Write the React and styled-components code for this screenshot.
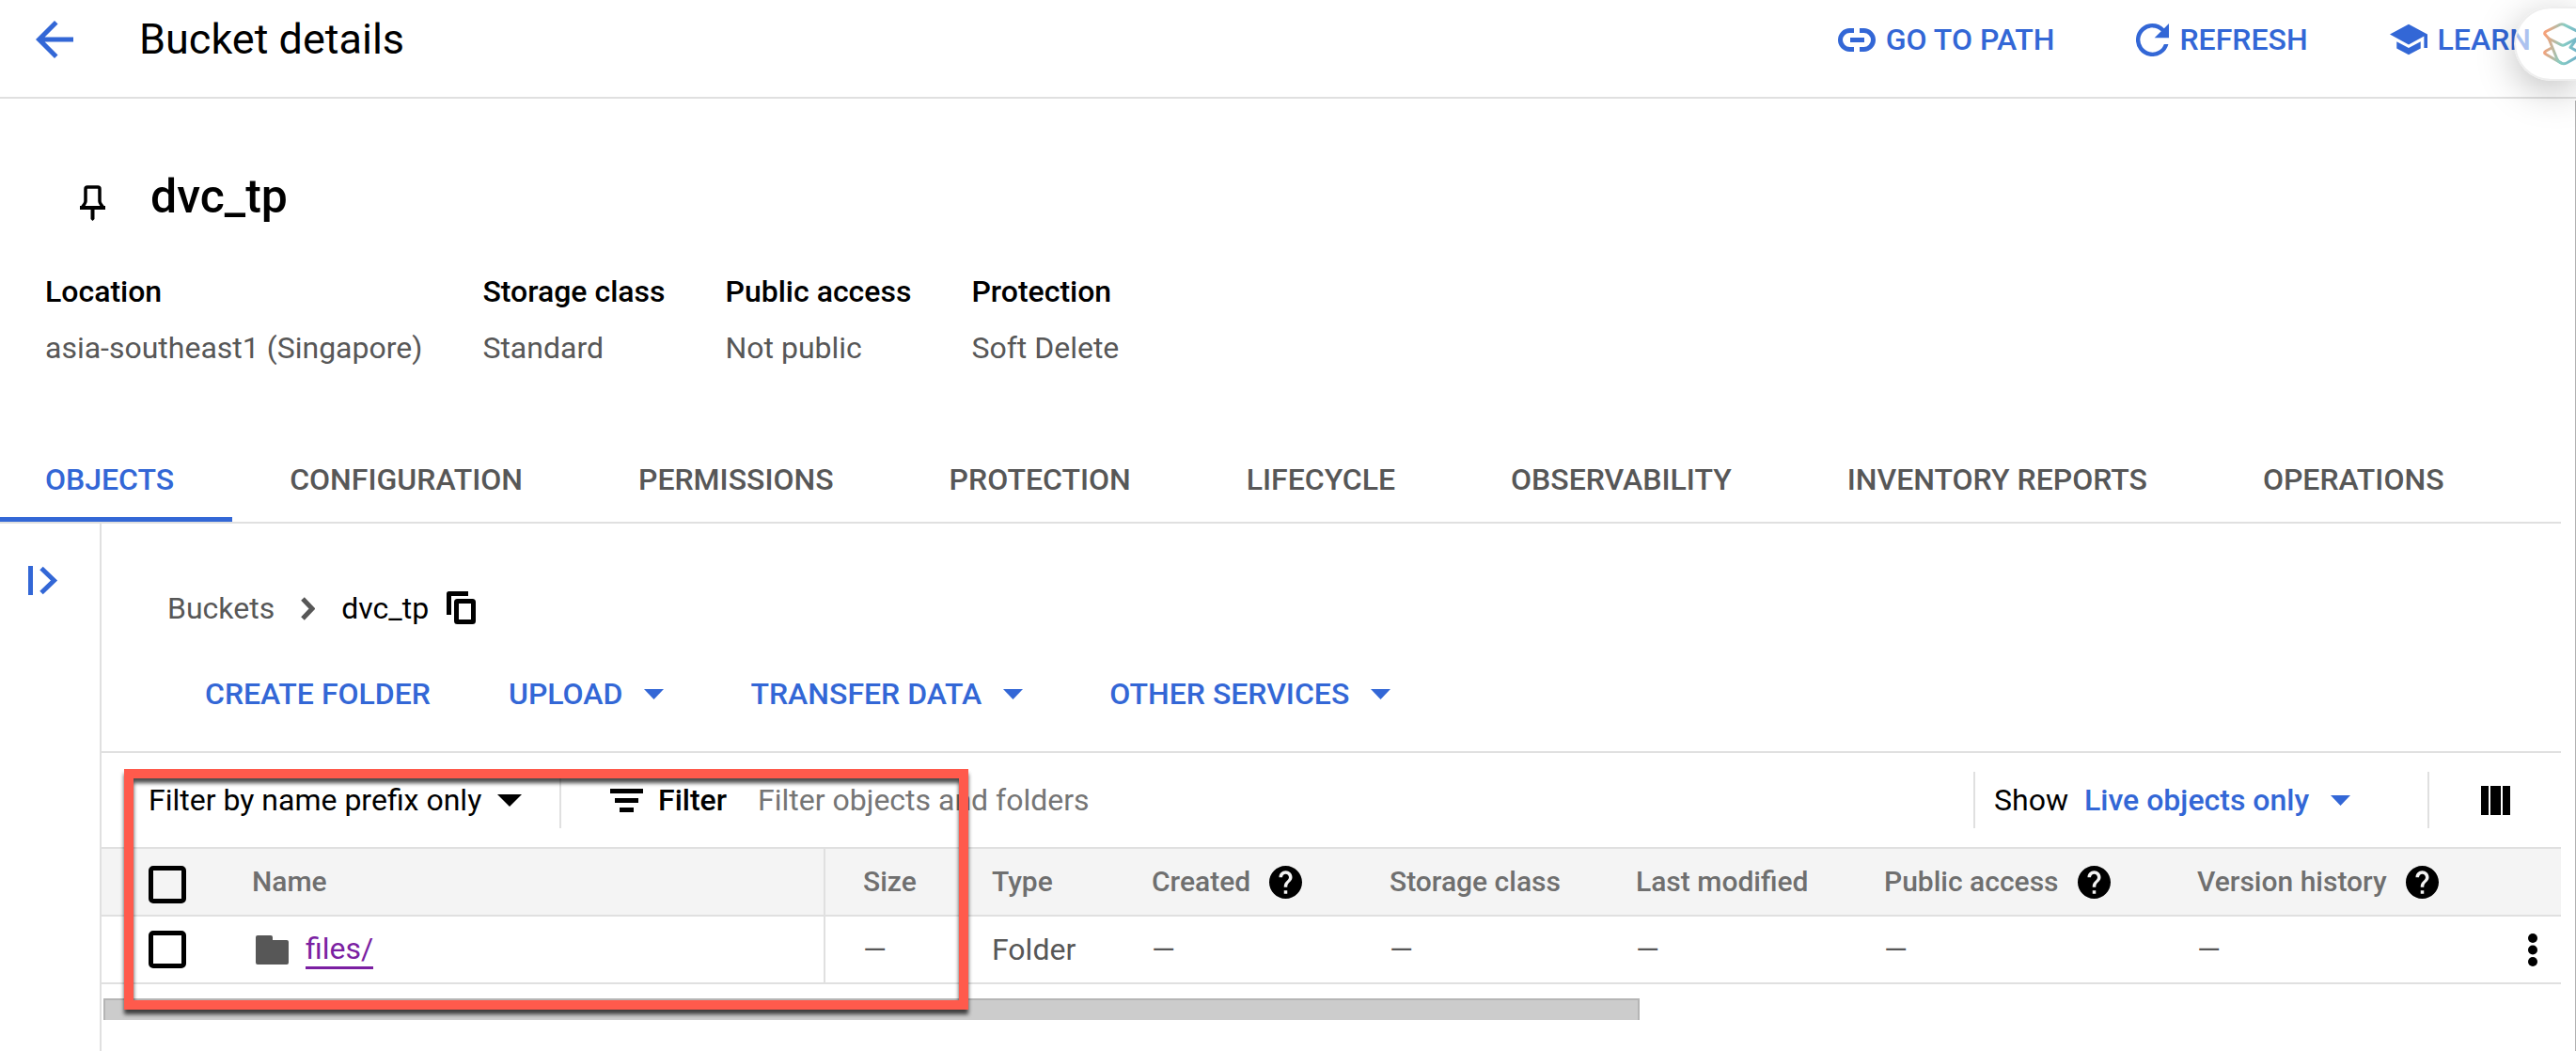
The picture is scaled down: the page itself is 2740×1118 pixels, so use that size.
import React from "react";
import styled, { createGlobalStyle } from "styled-components";

const blue = "#3367d6";
const line = "#e0e0e0";
const grey = "#575757";

const GlobalStyle = createGlobalStyle`
  *, *::before, *::after { box-sizing: border-box; }
  body {
    margin: 0;
    background: #fff;
    color: #000;
    font-family: Roboto, "Liberation Sans", sans-serif;
    font-size: 32px;
    line-height: 40px;
  }
  button, select, input { font: inherit; color: inherit; }
  h1, h2, p, dl, dd { margin: 0; }
`;

const Page = styled.div`
  position: relative;
  min-height: 100vh;
  overflow: hidden;
  display: flex;
  flex-direction: column;
`;

const Header = styled.header`
  display: flex;
  align-items: center;
  padding: 12px 48px 31px 28px;
  border-bottom: 2px solid ${line};
`;

const PlainButton = styled.button`
  display: flex;
  align-items: center;
  padding: 0;
  border: 0;
  background: none;
  white-space: nowrap;
  cursor: pointer;
`;

const BackButton = styled(PlainButton)`
  width: 60px;
  height: 60px;
  justify-content: center;
  color: ${blue};
`;

const PageTitle = styled.h1`
  margin-left: 60px;
  font-size: 45px;
  line-height: 60px;
  font-weight: 400;
`;

const HeaderActions = styled.nav`
  display: flex;
  align-items: center;
  gap: 87px;
  margin-left: auto;
`;

const HeaderAction = styled(PlainButton)`
  gap: 11px;
  color: ${blue};
  font-weight: 500;
`;

const Main = styled.main`
  flex: 1;
  display: flex;
  flex-direction: column;
  margin-top: 2px;
  padding-right: 15px;
  border-right: 1px solid #b0b0b0;
`;

const BucketHeading = styled.div`
  display: flex;
  align-items: flex-end;
  gap: 48px;
  padding: 72px 0 0 85px;
`;

const PinButton = styled(PlainButton)`
  padding-bottom: 4px;
`;

const BucketName = styled.h2`
  font-size: 50px;
  line-height: 60px;
  font-weight: 500;
`;

const Facts = styled.dl`
  display: flex;
  gap: 64px;
  padding: 51px 48px 75px;
`;

const Fact = styled.div`
  display: flex;
  flex-direction: column;
  gap: 20px;
`;

const FactLabel = styled.dt`
  font-weight: 500;
`;

const FactValue = styled.dd`
  color: ${grey};
`;

const Tabs = styled.div`
  display: flex;
  border-bottom: 2px solid ${line};
`;

const Tab = styled(PlainButton)`
  height: 90px;
  padding: 0 62px 0 61px;
  font-weight: 500;
  color: ${(p) => (p.$active ? blue : grey)};
  box-shadow: ${(p) => (p.$active ? `inset 0 -5px ${blue}` : "none")};
  &:first-child { padding-left: 48px; }
`;

const Body = styled.div`
  flex: 1;
  display: grid;
  grid-template-columns: 108px minmax(0, 1fr);
`;

const Rail = styled.aside`
  padding: 45px 0 0 30px;
  border-right: 2px solid ${line};
  color: ${blue};
`;

const Panel = styled.section`
  padding-top: 70px;
`;

const Breadcrumb = styled.nav`
  display: flex;
  align-items: center;
  padding-left: 70px;
`;

const CrumbLink = styled.a`
  margin-right: 28px;
  color: ${grey};
  text-decoration: none;
`;

const CrumbCurrent = styled.span`
  margin: 0 19px 0 28px;
`;

const Actions = styled.div`
  display: flex;
  padding: 51px 0 41px 68px;
  border-bottom: 2px solid ${line};
`;

const Action = styled(PlainButton)`
  gap: 23px;
  padding: 0 ${(p) => (p.$menu ? 50 : 41)}px 0 42px;
  color: ${blue};
  font-weight: 500;
`;

const Toolbar = styled.div`
  display: flex;
  align-items: center;
  height: 100px;
  padding-left: 50px;
`;

const Divider = styled.span`
  width: 2px;
  height: 60px;
  background: ${line};
`;

const SelectWrap = styled.span`
  display: inline-flex;
  align-items: center;
  gap: ${(p) => p.$gap}px;
  color: ${(p) => (p.$accent ? blue : "#000")};
`;

const Select = styled.select`
  appearance: none;
  padding: 0;
  border: 0;
  background: none;
  line-height: 40px;
  font-weight: ${(p) => (p.$accent ? 500 : 400)};
`;

const PrefixGroup = styled.div`
  display: flex;
  align-items: center;
  gap: 40px;
`;

const FilterGroup = styled.div`
  flex: 1;
  display: flex;
  align-items: center;
  padding-left: 52px;
`;

const FilterLabel = styled.label`
  display: inline-flex;
  align-items: center;
  gap: 16px;
  font-weight: 500;
`;

const FilterInput = styled.input`
  flex: 1;
  min-width: 0;
  margin-left: 33px;
  padding: 0;
  border: 0;
  outline: 0;
  background: none;
  &::placeholder { color: #757575; opacity: 1; }
`;

const ShowGroup = styled.div`
  display: flex;
  align-items: center;
  gap: 17px;
  padding: 0 82px 0 20px;
`;

const ColumnsButton = styled(PlainButton)`
  padding: 0 54px 0 55px;
`;

const Table = styled.table`
  width: 100%;
  table-layout: fixed;
  border-collapse: collapse;
`;

const Col = styled.col`
  width: ${(p) => (p.$w ? `${p.$w}px` : "auto")};
`;

const HeadRow = styled.tr`
  height: 72px;
  background: #f4f4f4;
  border-top: 2px solid ${line};
  border-bottom: 2px solid ${line};
`;

const Row = styled.tr`
  height: 72px;
  border-bottom: 2px solid ${line};
`;

const HeadCell = styled.th`
  padding: 0 0 0 40px;
  border-right: ${(p) => (p.$ruled ? `2px solid ${line}` : 0)};
  font-size: 30px;
  line-height: 40px;
  font-weight: 500;
  text-align: left;
  white-space: nowrap;
  color: #6f6f6f;
`;

const HeadLabel = styled.span`
  display: flex;
  align-items: center;
  gap: 20px;
`;

const HelpButton = styled(PlainButton)`
  color: #000;
`;

const Cell = styled.td`
  padding: 0 0 0 40px;
  border-right: ${(p) => (p.$ruled ? `2px solid ${line}` : 0)};
  color: ${grey};
`;

const CheckHead = styled.td`
  padding: 6px 0 0 50px;
`;

const CheckCell = styled.td`
  padding: 0 0 0 50px;
`;

const MoreCell = styled.td`
  padding: 0 25px 0 0;
`;

const MoreButton = styled(PlainButton)`
  margin-left: auto;
`;

const Checkbox = styled.input`
  appearance: none;
  display: block;
  width: 40px;
  height: 40px;
  margin: 0;
  border: 5px solid #000;
  border-radius: 5px;
`;

const FileEntry = styled.div`
  display: flex;
  align-items: center;
  gap: 18px;
  padding-left: 4px;
`;

const FileLink = styled.a`
  border-bottom: 3px solid #7b1fa2;
  line-height: 38px;
  color: #7b1fa2;
  text-decoration: none;
`;

const Scrollbar = styled.div`
  margin: 15px 0 0 2px;
`;

const ScrollThumb = styled.div`
  width: 62.5%;
  height: 23px;
  border: solid #b5b5b5;
  border-width: 2px 2px 0;
  background: #ccc;
`;

const Highlight = styled.div`
  position: absolute;
  left: 132px;
  top: 818px;
  width: 898px;
  height: 256px;
  border: 10px solid #ff5a4c;
  filter: drop-shadow(0 5px 2px rgba(0, 0, 0, 0.7));
  pointer-events: none;
`;

const Floating = styled.button`
  position: absolute;
  top: 7px;
  right: 0;
  width: 66px;
  height: 79px;
  padding: 0 0 0 29px;
  border: 2px solid #eee;
  border-right: 0;
  border-radius: 40px 0 0 40px;
  background: rgba(255, 255, 255, 0.6);
  box-shadow: 0 10px 40px rgba(0, 0, 0, 0.25);
  overflow: hidden;
`;

const Svg = styled.svg`
  display: block;
  flex: none;
`;

const Icon = ({ w, h, box, children }) => (
  <Svg width={w} height={h} viewBox={box || `0 0 ${w} ${h}`} fill="currentColor" aria-hidden="true">
    {children}
  </Svg>
);

const Caret = ({ large }) =>
  large ? (
    <Icon w={26} h={13}><path d="M0 0h26L13 13z" /></Icon>
  ) : (
    <Icon w={21} h={11}><path d="M0 0h21L10.500 11z" /></Icon>
  );

const BackIcon = () => (
  <Icon w={40} h={40} box="4 4 16 16">
    <path d="M20 11H7.830l5.590-5.590L12 4l-8 8 8 8 1.410-1.410L7.830 13H20v-2z" />
  </Icon>
);

const LinkIcon = () => (
  <Icon w={40} h={25}>
    <path d="M17 2.500h-4.500a10 10 0 0 0 0 20H17M23 2.500h4.500a10 10 0 0 1 0 20H23M13 12.500h15" fill="none" stroke="currentColor" strokeWidth="5" />
  </Icon>
);

const RefreshIcon = () => (
  <Icon w={35} h={35} box="4 4 16 16">
    <path d="M17.650 6.350A7.958 7.958 0 0 0 12 4a8 8 0 1 0 7.730 10h-2.080A6 6 0 1 1 12 6c1.660 0 3.140.690 4.220 1.780L13 11h7V4l-2.350 2.350z" />
  </Icon>
);

const LearnIcon = () => (
  <Icon w={40} h={34} box="1 3 22 18">
    <path d="M5 13.180v4L12 21l7-3.820v-4L12 17l-7-3.820zM12 3 1 9l11 6 9-4.910V17h2V9L12 3z" />
  </Icon>
);

const PinIcon = () => (
  <Icon w={27} h={38}>
    <path d="M8 2h11q2 0 2 2v13q0 2 4 7H2q4-5 4-7V4q0-2 2-2z" fill="none" stroke="currentColor" strokeWidth="3.500" />
    <path d="M0 22h27v4H0zM11.500 25h4v11l-2 2-2-2z" />
  </Icon>
);

const RailIcon = () => (
  <Icon w={32} h={31}>
    <path d="M0 0h5v31H0z" />
    <path d="M14 2.500 27.500 15.500 14 28.500" fill="none" stroke="currentColor" strokeWidth="5" />
  </Icon>
);

const ChevronIcon = () => (
  <Icon w={15} h={25}>
    <path d="M2 2l10 10.500L2 23" fill="none" stroke={grey} strokeWidth="5" />
  </Icon>
);

const CopyIcon = () => (
  <Icon w={31} h={36}>
    <path d="M2.500 25V2.500H23" fill="none" stroke="currentColor" strokeWidth="5" strokeLinejoin="round" />
    <rect x="10.500" y="10.500" width="18" height="22" rx="1" fill="none" stroke="currentColor" strokeWidth="5" />
  </Icon>
);

const FilterIcon = () => (
  <Icon w={35} h={25}>
    <path d="M0 0h35v5H0zM5 10h25v5H5zM10 20h15v5H10z" />
  </Icon>
);

const ColumnsIcon = () => (
  <Icon w={31} h={31}>
    <path d="M0 0h8v31H0zM10 0h11v31H10zM23 0h8v31h-8z" />
  </Icon>
);

const HelpIcon = () => (
  <Icon w={35} h={35} box="2 2 20 20">
    <path d="M12 2C6.480 2 2 6.480 2 12s4.480 10 10 10 10-4.480 10-10S17.520 2 12 2zm1 17h-2v-2h2v2zm2.070-7.750-.9.920C13.450 12.900 13 13.500 13 15h-2v-.5c0-1.100.450-2.100 1.170-2.830l1.240-1.260c.370-.360.590-.860.590-1.410 0-1.100-.9-2-2-2s-2 .9-2 2H8c0-2.210 1.790-4 4-4s4 1.790 4 4c0 .880-.360 1.680-.930 2.250z" />
  </Icon>
);

const FolderIcon = () => (
  <Icon w={35} h={31}>
    <path d="M2 0h14q2 0 2 2v3h15q2 0 2 2v22q0 2-2 2H2q-2 0-2-2V2q0-2 2-2z" />
  </Icon>
);

const MoreIcon = () => (
  <Icon w={10} h={35}>
    <circle cx="5" cy="5" r="5" />
    <circle cx="5" cy="17.500" r="5" />
    <circle cx="5" cy="30" r="5" />
  </Icon>
);

const AssistantLogo = () => (
  <Icon w={42} h={46}>
    <defs>
      <linearGradient id="assistant" gradientUnits="userSpaceOnUse" x1="0" y1="20" x2="42" y2="26">
        <stop offset="0.050" stopColor="#f5a27a" />
        <stop offset="0.500" stopColor="#86cdc4" />
        <stop offset="0.900" stopColor="#6fb0c8" />
      </linearGradient>
    </defs>
    <g fill="none" stroke="url(#assistant)" strokeWidth="3" strokeLinejoin="round" strokeLinecap="round">
      <path d="M3 9.500 18 2.200q2-1 4 0L38 10q2 1.500 1 3.500L36 17 23 23.700q-2 1-4 0L6 17 2 12.500q-1-1.500 1-3z" />
      <path d="M6 17l8.500 21q1.500 4 5 5" />
      <path d="M8 27.500 3 30.200q-3 1.800 0 3.500L19 43q3 1.500 6 0l14-8q2-1.500 0-3l-9-5" />
      <path d="M36 17l-7 9.500" />
    </g>
  </Icon>
);

const headerActions = [
  ["GO TO PATH", LinkIcon],
  ["REFRESH", RefreshIcon],
  ["LEARN", LearnIcon],
];

const facts = [
  ["Location", "asia-southeast1 (Singapore)"],
  ["Storage class", "Standard"],
  ["Public access", "Not public"],
  ["Protection", "Soft Delete"],
];

const tabs = [
  "OBJECTS",
  "CONFIGURATION",
  "PERMISSIONS",
  "PROTECTION",
  "LIFECYCLE",
  "OBSERVABILITY",
  "INVENTORY REPORTS",
  "OPERATIONS",
];

const actions = [
  ["CREATE FOLDER", false],
  ["UPLOAD", true],
  ["TRANSFER DATA", true],
  ["OTHER SERVICES", true],
];

const columns = [
  { label: "Size", value: "—", width: 138 },
  { label: "Type", value: "Folder", width: 170 },
  { label: "Created", value: "—", width: 253, help: true },
  { label: "Storage class", value: "—", width: 262 },
  { label: "Last modified", value: "—", width: 264 },
  { label: "Public access", value: "—", width: 333, help: true },
  { label: "Version history", value: "—", width: 320, help: true },
];

export default function App() {
  return (
    <>
      <GlobalStyle />
      <Page>
        <Header>
          <BackButton aria-label="Back"><BackIcon /></BackButton>
          <PageTitle>Bucket details</PageTitle>
          <HeaderActions>
            {headerActions.map(([label, Glyph]) => (
              <HeaderAction key={label}><Glyph />{label}</HeaderAction>
            ))}
          </HeaderActions>
        </Header>

        <Main>
          <BucketHeading>
            <PinButton aria-label="Pin bucket"><PinIcon /></PinButton>
            <BucketName>dvc_tp</BucketName>
          </BucketHeading>

          <Facts>
            {facts.map(([label, value]) => (
              <Fact key={label}>
                <FactLabel>{label}</FactLabel>
                <FactValue>{value}</FactValue>
              </Fact>
            ))}
          </Facts>

          <Tabs role="tablist">
            {tabs.map((label, i) => (
              <Tab key={label} role="tab" aria-selected={i === 0} $active={i === 0}>{label}</Tab>
            ))}
          </Tabs>

          <Body>
            <Rail>
              <PlainButton aria-label="Expand folder browser"><RailIcon /></PlainButton>
            </Rail>

            <Panel>
              <Breadcrumb aria-label="Breadcrumb">
                <CrumbLink href="#buckets">Buckets</CrumbLink>
                <ChevronIcon />
                <CrumbCurrent>dvc_tp</CrumbCurrent>
                <PlainButton aria-label="Copy path"><CopyIcon /></PlainButton>
              </Breadcrumb>

              <Actions>
                {actions.map(([label, menu]) => (
                  <Action key={label} $menu={menu} aria-haspopup={menu ? "menu" : undefined}>
                    {label}
                    {menu && <Caret />}
                  </Action>
                ))}
              </Actions>

              <Toolbar>
                <PrefixGroup>
                  <SelectWrap $gap={16}>
                    <Select aria-label="Filter mode">
                      <option>Filter by name prefix only</option>
                    </Select>
                    <Caret large />
                  </SelectWrap>
                  <Divider />
                </PrefixGroup>
                <FilterGroup>
                  <FilterLabel htmlFor="filter"><FilterIcon />Filter</FilterLabel>
                  <FilterInput id="filter" placeholder="Filter objects and folders" />
                </FilterGroup>
                <Divider />
                <ShowGroup>
                  <label htmlFor="show">Show</label>
                  <SelectWrap $gap={22} $accent>
                    <Select id="show" $accent>
                      <option>Live objects only</option>
                    </Select>
                    <Caret />
                  </SelectWrap>
                </ShowGroup>
                <Divider />
                <ColumnsButton aria-label="Column display options"><ColumnsIcon /></ColumnsButton>
              </Toolbar>

              <Table>
                <colgroup>
                  <Col $w={120} />
                  <Col $w={649} />
                  {columns.map((c) => <Col key={c.label} $w={c.width} />)}
                  <Col />
                </colgroup>
                <thead>
                  <HeadRow>
                    <CheckHead><Checkbox type="checkbox" aria-label="Select all" /></CheckHead>
                    <HeadCell scope="col" $ruled>Name</HeadCell>
                    {columns.map((c) => (
                      <HeadCell key={c.label} scope="col">
                        <HeadLabel>
                          {c.label}
                          {c.help && <HelpButton aria-label={`About ${c.label}`}><HelpIcon /></HelpButton>}
                        </HeadLabel>
                      </HeadCell>
                    ))}
                    <td />
                  </HeadRow>
                </thead>
                <tbody>
                  <Row>
                    <CheckCell><Checkbox type="checkbox" aria-label="Select files/" /></CheckCell>
                    <Cell $ruled>
                      <FileEntry>
                        <FolderIcon />
                        <FileLink href="#files">files/</FileLink>
                      </FileEntry>
                    </Cell>
                    {columns.map((c) => (
                      <Cell key={c.label}>{c.value}</Cell>
                    ))}
                    <MoreCell>
                      <MoreButton aria-label="More actions"><MoreIcon /></MoreButton>
                    </MoreCell>
                  </Row>
                </tbody>
              </Table>
              <Scrollbar><ScrollThumb /></Scrollbar>
            </Panel>
          </Body>
        </Main>

        <Highlight />
        <Floating aria-label="Open assistant"><AssistantLogo /></Floating>
      </Page>
    </>
  );
}
